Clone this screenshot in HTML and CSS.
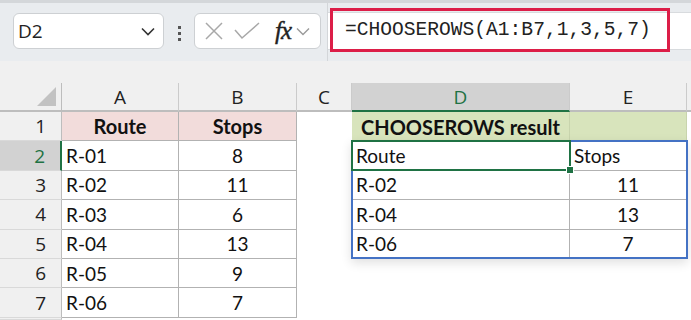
FILE: index.html
```html
<!doctype html>
<html>
  <head>
    <title>CHOOSEROWS</title>
    <link rel="stylesheet" href="styles.css">
  </head>
  <body>
    <div class="toolbar">
      <div class="namebox">
        <span>D2</span>
        <svg class="chev" width="14" height="9" viewBox="0 0 14 9"><path d="M1 1.5 L7 7.5 L13 1.5" fill="none" stroke="#333" stroke-width="1.6"/></svg>
      </div>
      <div class="dots"><i></i><i></i><i></i></div>
      <div class="fxbox">
        <svg width="18" height="18" viewBox="0 0 18 18"><path d="M1 1 L17 17 M17 1 L1 17" stroke="#a8a8a8" stroke-width="1.5" fill="none"/></svg>
        <svg width="26" height="18" viewBox="0 0 26 18"><path d="M1 8 L8 16 L25 1" stroke="#a8a8a8" stroke-width="1.5" fill="none"/></svg>
        <span class="fx">fx</span>
        <svg width="14" height="9" viewBox="0 0 14 9"><path d="M1 1.5 L7 7.5 L13 1.5" fill="none" stroke="#9a9a9a" stroke-width="1.4"/></svg>
      </div>
      <div class="divider"></div>
      <div class="formula">
        <div class="formula_input"></div>
        <div class="highlight">=CHOOSEROWS(A1:B7,1,3,5,7)</div>
      </div>
    </div>
    <div class="strip"></div>

    <div class="sheet">
      <div class="hd corner"><div class="tri"></div></div>
      <div class="hd col">A</div>
      <div class="hd col">B</div>
      <div class="hd col">C</div>
      <div class="hd col sel_col">D</div>
      <div class="hd col">E</div>
      <div class="hd col last"></div>

      <div class="hd row">1</div>
      <div class="cell bordered pink bold center">Route</div>
      <div class="cell bordered pink bold center">Stops</div>
      <div class="cell"></div>
      <div class="cell green bold center">CHOOSEROWS result</div>
      <div class="cell green"></div>
      <div class="cell"></div>

      <div class="hd row sel_row">2</div>
      <div class="cell bordered">R-01</div>
      <div class="cell bordered center">8</div>
      <div class="cell"></div>
      <div class="cell spill anchor">
        Route
        <!-- spill range and active cell drawn over the grid -->
        <div class="spill_range"></div>
        <div class="active_cell"></div>
      </div>
      <div class="cell spill">Stops</div>
      <div class="cell"></div>

      <div class="hd row">3</div>
      <div class="cell bordered">R-02</div>
      <div class="cell bordered center">11</div>
      <div class="cell"></div>
      <div class="cell spill">R-02</div>
      <div class="cell spill center">11</div>
      <div class="cell"></div>

      <div class="hd row">4</div>
      <div class="cell bordered">R-03</div>
      <div class="cell bordered center">6</div>
      <div class="cell"></div>
      <div class="cell spill">R-04</div>
      <div class="cell spill center">13</div>
      <div class="cell"></div>

      <div class="hd row">5</div>
      <div class="cell bordered">R-04</div>
      <div class="cell bordered center">13</div>
      <div class="cell"></div>
      <div class="cell spill">R-06</div>
      <div class="cell spill center">7</div>
      <div class="cell"></div>

      <div class="hd row">6</div>
      <div class="cell bordered">R-05</div>
      <div class="cell bordered center">9</div>
      <div class="cell"></div>
      <div class="cell"></div>
      <div class="cell"></div>
      <div class="cell"></div>

      <div class="hd row">7</div>
      <div class="cell bordered">R-06</div>
      <div class="cell bordered center">7</div>
      <div class="cell"></div>
      <div class="cell"></div>
      <div class="cell"></div>
      <div class="cell"></div>

      <div class="hd row"></div>
      <div class="cell"></div>
      <div class="cell"></div>
      <div class="cell"></div>
      <div class="cell"></div>
      <div class="cell"></div>
      <div class="cell"></div>
    </div>
  </body>
</html>
```

FILE: styles.css
```css
body {
  margin: 0;
  background: #fff;
  font-family: "Open Sans", sans-serif;
  overflow: hidden;
  height: 320px;
}

.toolbar {
  height: 61px;
  background: #e9ecef;
  border-top: 3px solid #d4d7da;
  box-sizing: border-box;
  display: flex;
  align-items: flex-start;
}

.namebox {
  margin: 10px 0 0 13px;
  width: 151px;
  height: 36px;
  box-sizing: border-box;
  background: #fff;
  border: 1px solid #cdd0d3;
  border-radius: 6px;
  display: flex;
  align-items: center;
  justify-content: space-between;
  padding: 0 8px 0 4px;
  font-size: 19px;
  color: #222;
}

.dots {
  margin: 23px 0 0 14px;
  width: 3px;
  display: flex;
  flex-direction: column;
  gap: 3px;
}
.dots i {
  display: block;
  width: 3px;
  height: 3px;
  background: #555;
}

.fxbox {
  margin: 10px 0 0 13px;
  width: 127px;
  height: 36px;
  box-sizing: border-box;
  background: #fff;
  border: 1px solid #cdd0d3;
  border-radius: 6px;
  display: flex;
  align-items: center;
  padding: 0 3px 0 10px;
  gap: 11px;
}
.fxbox .fx {
  font-family: "Liberation Serif", serif;
  font-style: italic;
  font-size: 25px;
  color: #222;
  margin-left: 4px;
  margin-right: -6px;
  letter-spacing: -1px;
  -webkit-text-stroke: 0.4px #222;
}

.divider {
  width: 1px;
  height: 58px;
  background: #d3d6d9;
  margin-left: 6px;
}

.formula {
  flex: 1;
  position: relative;
  height: 58px;
}
.formula_input {
  margin-top: 9px;
  height: 36px;
  background: #fff;
  border-top: 1px solid #d8dbde;
  border-bottom: 1px solid #d8dbde;
}
.highlight {
  position: absolute;
  left: 2px;
  top: 5px;
  width: 340px;
  height: 44px;
  box-sizing: border-box;
  border: 3px solid #dc1e48;
  font-family: "Liberation Mono", monospace;
  font-size: 19.6px;
  color: #222;
  padding: 8px 0 0 12px;
}

.strip {
  height: 22px;
  background: #f0f0f0;
}

.sheet {
  display: grid;
  grid-template-columns: 62px 117px 118px 55px 218px 117px 4px;
  grid-template-rows: 29px repeat(7, 29.4px) 2px;
  overflow: hidden;
  font-family: Lato, sans-serif;
  font-size: 19px;
  color: #111;
}

.hd {
  background: #f0f0f0;
  box-sizing: border-box;
  display: flex;
  align-items: center;
  font-family: "Open Sans", sans-serif;
  font-size: 19px;
  color: #222;
}
.col {
  justify-content: center;
  border-right: 1px solid #cbcbcb;
  border-bottom: 2px solid #bdbdbd;
}
.col.last {
  border-right: none;
}
.corner {
  position: relative;
  border-right: 1px solid #bdbdbd;
  border-bottom: 2px solid #bdbdbd;
}
.tri {
  position: absolute;
  right: 5px;
  bottom: 4px;
  width: 0;
  height: 0;
  border-left: 19px solid transparent;
  border-bottom: 19px solid #c2c2c2;
}
.row {
  justify-content: flex-end;
  padding-right: 15px;
  border-right: 1px solid #bdbdbd;
  border-bottom: 1px solid #d9d9d9;
}
.sel_col {
  background: #d2d2d2;
  color: #1f7244;
  border-bottom: 2px solid #1f7244;
}
.sel_row {
  background: #d2d2d2;
  color: #1f7244;
  border-right: 2px solid #1f7244;
}

.cell {
  box-sizing: border-box;
  display: flex;
  align-items: center;
  padding-left: 4px;
  white-space: nowrap;
  background: #fff;
}
.center {
  justify-content: center;
  padding-left: 0;
}
.bold {
  font-weight: bold;
  font-size: 20px;
}
.bordered {
  border-right: 1px solid #b2b2b2;
  border-bottom: 1px solid #b2b2b2;
}
.pink {
  background: #f2dcdb;
}
.green {
  background: #d8e4bc;
  border-right: 1px solid #c8d4ad;
}
.spill {
  border-right: 1px solid #b2b2b2;
  border-bottom: 1px solid #b2b2b2;
}

.anchor {
  position: relative;
}
.spill_range {
  position: absolute;
  left: -1px;
  top: -1px;
  width: 337px;
  height: 119px;
  box-sizing: border-box;
  border: 2px solid #4472c4;
  box-shadow: 0 4px 10px rgba(0, 0, 0, 0.12);
  pointer-events: none;
  z-index: 1;
}
.active_cell {
  position: absolute;
  left: -1px;
  top: -1px;
  width: 220px;
  height: 31px;
  box-sizing: border-box;
  border: 2px solid #1f7244;
  pointer-events: none;
  z-index: 2;
}
.active_cell::after {
  content: "";
  position: absolute;
  right: -5px;
  bottom: -5px;
  width: 6px;
  height: 6px;
  background: #1f7244;
  border: 1px solid #fff;
}
```
